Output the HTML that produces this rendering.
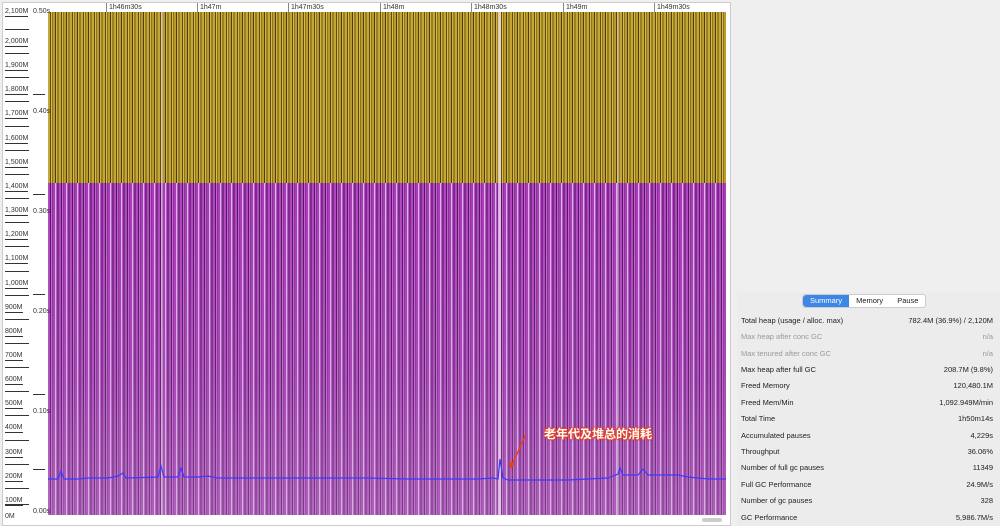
<!DOCTYPE html>
<html><head><meta charset="utf-8"><style>
body{margin:0;width:1000px;height:526px;background:#efefef;position:relative;overflow:hidden;font-family:"Liberation Sans",sans-serif}
.box{position:absolute;left:2px;top:2px;width:727px;height:522px;background:#fff;border:1px solid #ccc}
.hdr{position:absolute;left:48px;top:3px;width:678px;height:9px;background:#fff;border-bottom:1px solid #bbb}
.hdr span{position:absolute;top:0;font-size:7px;color:#333;border-left:1px solid #888;padding-left:2px;line-height:9px}
.yel{position:absolute;left:48px;top:12px;width:678px;height:171px;
background:repeating-linear-gradient(90deg,#c4a634 0 2px,#5e4c12 2px 3px,#dcbc40 3px 4px,#8c7420 4px 5px,#b89a2e 5px 7px,#4e3e0e 7px 8px,#d4b43a 8px 9px,#9a8024 9px 11px)}
.pur{position:absolute;left:48px;top:183px;width:678px;height:332px;
background:repeating-linear-gradient(90deg,#b444c4 0 2px,#4a1a52 2px 3px,#cc5cdc 3px 4px,#8a3096 4px 5px,#a83cb8 5px 7px,#d8b8e0 7px 8px,#c050d0 8px 9px,#7a2a88 9px 11px)}
.fade{position:absolute;left:48px;top:183px;width:678px;height:332px;background:linear-gradient(180deg,rgba(170,150,180,0) 0%,rgba(170,150,180,.15) 60%,rgba(190,175,195,.3) 100%)}
.yl{position:absolute;left:5px;font-size:7px;color:#333;border-top:1px solid #333;width:24px;padding-top:0}
.yl b{font-weight:normal;position:absolute;top:8px;left:0;border-bottom:1px solid #333;line-height:8px}
.sl{position:absolute;left:33px;font-size:7px;color:#333;line-height:8px}
.panel{position:absolute;left:737px;top:292px;width:263px;height:234px;background:#ececec}
.tabs{position:absolute;left:65px;top:2px;height:12px;display:flex;font-size:7.5px;line-height:12px;background:#fff;border:1px solid #ccc;border-radius:3px}
.tabs div{padding:0 7px;color:#222}
.tabs .on{background:#3d86e6;color:#fff;border-radius:3px 0 0 3px}
.row{position:absolute;left:4px;width:252px;font-size:7.5px;color:#222;display:flex;justify-content:space-between}
.row.g{color:#999}
.ann{position:absolute;left:544px;top:425px;font-size:12px;font-weight:bold;color:#fff;font-family:"Liberation Sans","Noto Sans CJK SC",sans-serif;text-shadow:0 0 2px #e8401a,0 0 2px #e8401a,1px 1px 1px #e8401a,-1px -1px 1px #e8401a}
.scroll{position:absolute;left:702px;top:518px;width:20px;height:4px;background:#ccc;border-radius:2px}
</style></head><body>
<div class="box"></div>
<div class="hdr">
<span style="left:58px">1h46m30s</span><span style="left:149px">1h47m</span><span style="left:240px">1h47m30s</span><span style="left:332px">1h48m</span><span style="left:423px">1h48m30s</span><span style="left:515px">1h49m</span><span style="left:606px">1h49m30s</span>
</div>
<div class="yel"></div>
<div class="pur"></div>
<div class="fade"></div>
<div style="position:absolute;left:161px;top:12px;width:2px;height:503px;background:#f0d8f4;opacity:.5"></div>
<div style="position:absolute;left:498px;top:12px;width:3px;height:503px;background:#f8e8fa;opacity:.7"></div>
<div style="position:absolute;left:617px;top:12px;width:2px;height:503px;background:#f0d8f4;opacity:.4"></div>
<svg style="position:absolute;left:48px;top:12px" width="678" height="503">
<polyline fill="none" stroke="#3a3aff" stroke-width="1.2" points="0,467 10,467 13,459 16,467 30,467 40,466 60,466 70,464 75,461 78,466 110,465 113,454 116,465 130,465 133,456 136,465 150,465 160,464 170,466 200,466 240,466 280,466 320,466 360,467 400,467 430,467 445,466 450,467 452,447 455,466 460,468 480,468 520,468 540,467 560,466 570,462 572,456 575,463 590,463 595,457 600,463 630,463 640,465 660,467 678,467"/>
<polyline fill="none" stroke="#e8401a" stroke-width="1.5" points="478,422 464,453"/>
<polygon fill="#e8401a" points="462,457 461,449 467,452"/>
</svg>
<div class="ann">老年代及堆总的消耗</div>
<div class="scroll"></div>
<div class="yl" style="top:12px;border-top:none"><b style="top:-4px">2,100M</b></div>
<div class="yl" style="top:29px"><b>2,000M</b></div>
<div class="yl" style="top:53px"><b>1,900M</b></div>
<div class="yl" style="top:77px"><b>1,800M</b></div>
<div class="yl" style="top:101px"><b>1,700M</b></div>
<div class="yl" style="top:126px"><b>1,600M</b></div>
<div class="yl" style="top:150px"><b>1,500M</b></div>
<div class="yl" style="top:174px"><b>1,400M</b></div>
<div class="yl" style="top:198px"><b>1,300M</b></div>
<div class="yl" style="top:222px"><b>1,200M</b></div>
<div class="yl" style="top:246px"><b>1,100M</b></div>
<div class="yl" style="top:271px"><b>1,000M</b></div>
<div class="yl" style="top:295px"><b>900M</b></div>
<div class="yl" style="top:319px"><b>800M</b></div>
<div class="yl" style="top:343px"><b>700M</b></div>
<div class="yl" style="top:367px"><b>600M</b></div>
<div class="yl" style="top:391px"><b>500M</b></div>
<div class="yl" style="top:415px"><b>400M</b></div>
<div class="yl" style="top:440px"><b>300M</b></div>
<div class="yl" style="top:464px"><b>200M</b></div>
<div class="yl" style="top:488px"><b>100M</b></div>
<div class="yl" style="top:504px;border-top:1px solid #333"><b style="border:none">0M</b></div>
<div class="sl" style="top:8px">0.50s</div>
<div class="sl" style="top:108px">0.40s</div>
<div class="sl" style="top:208px">0.30s</div>
<div class="sl" style="top:308px">0.20s</div>
<div class="sl" style="top:408px">0.10s</div>
<div class="sl" style="top:508px">0.00s</div>
<div style="position:absolute;left:33px;top:94px;width:12px;border-top:1px solid #333"></div>
<div style="position:absolute;left:33px;top:194px;width:12px;border-top:1px solid #333"></div>
<div style="position:absolute;left:33px;top:294px;width:12px;border-top:1px solid #333"></div>
<div style="position:absolute;left:33px;top:394px;width:12px;border-top:1px solid #333"></div>
<div style="position:absolute;left:33px;top:469px;width:12px;border-top:1px solid #333"></div>
<div class="panel">
<div class="tabs"><div class="on">Summary</div><div>Memory</div><div>Pause</div></div>
<div class="row" style="top:24px"><span>Total heap (usage / alloc. max)</span><span>782.4M (36.9%) / 2,120M</span></div>
<div class="row g" style="top:40px"><span>Max heap after conc GC</span><span>n/a</span></div>
<div class="row g" style="top:57px"><span>Max tenured after conc GC</span><span>n/a</span></div>
<div class="row" style="top:73px"><span>Max heap after full GC</span><span>208.7M (9.8%)</span></div>
<div class="row" style="top:89px"><span>Freed Memory</span><span>120,480.1M</span></div>
<div class="row" style="top:106px"><span>Freed Mem/Min</span><span>1,092.949M/min</span></div>
<div class="row" style="top:122px"><span>Total Time</span><span>1h50m14s</span></div>
<div class="row" style="top:139px"><span>Accumulated pauses</span><span>4,229s</span></div>
<div class="row" style="top:155px"><span>Throughput</span><span>36.06%</span></div>
<div class="row" style="top:171px"><span>Number of full gc pauses</span><span>11349</span></div>
<div class="row" style="top:188px"><span>Full GC Performance</span><span>24.9M/s</span></div>
<div class="row" style="top:204px"><span>Number of gc pauses</span><span>328</span></div>
<div class="row" style="top:221px"><span>GC Performance</span><span>5,986.7M/s</span></div>
</div>
</body></html>
